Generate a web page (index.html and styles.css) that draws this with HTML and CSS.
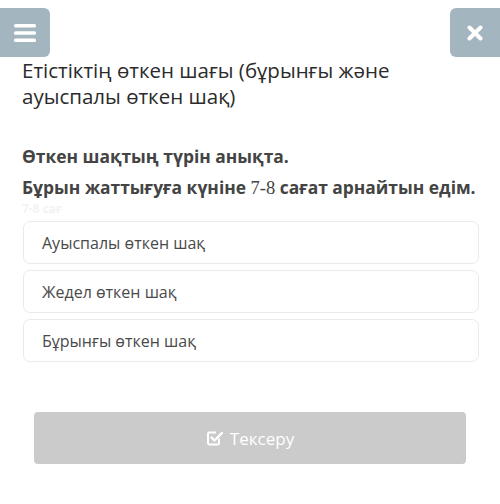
FILE: index.html
```html
<!DOCTYPE html>
<html>
<head>
<meta charset="utf-8">
<link rel="stylesheet" href="styles.css">
</head>
<body>
<div class="page">
  <div class="topbar">
    <div class="btn-menu">
      <svg width="22" height="18" viewBox="0 0 22 18"><rect x="0" y="0" width="22" height="3.4" rx="1.5" fill="#fff"/><rect x="0" y="7.3" width="22" height="3.4" rx="1.5" fill="#fff"/><rect x="0" y="14.6" width="22" height="3.4" rx="1.5" fill="#fff"/></svg>
    </div>
    <div class="btn-close">
      <svg width="16" height="16" viewBox="0 0 16 16"><path d="M2.5 2.5 L13.5 13.5 M13.5 2.5 L2.5 13.5" stroke="#fff" stroke-width="4" stroke-linecap="round"/></svg>
    </div>
  </div>
  <h1 class="title">Етістіктің өткен шағы (бұрынғы және ауыспалы өткен шақ)</h1>
  <div class="question">
    <p class="q-task">Өткен шақтың түрін анықта.</p>
    <p class="q-text">Бұрын жаттығуға күніне <span class="num">7-8</span> сағат арнайтын едім.</p>
    <p class="q-faint">7-8 сағ</p>
  </div>
  <div class="options">
    <div class="option">Ауыспалы өткен шақ</div>
    <div class="option">Жедел өткен шақ</div>
    <div class="option">Бұрынғы өткен шақ</div>
  </div>
  <div class="actions">
    <div class="check-btn">
      <svg width="18" height="18" viewBox="0 0 18 18"><path d="M13 9.5 V14 a1.5 1.5 0 0 1 -1.5 1.5 H3.5 A1.5 1.5 0 0 1 2 14 V5 a1.5 1.5 0 0 1 1.5 -1.5 H10" fill="none" stroke="#fff" stroke-width="2"/><path d="M5.5 8.5 L8.5 11.5 L16 4" fill="none" stroke="#fff" stroke-width="2.4" stroke-linecap="round" stroke-linejoin="round"/></svg>
      <span>Тексеру</span>
    </div>
  </div>
</div>
</body>
</html>
```
FILE: styles.css
```css
html, body {
  margin: 0;
  padding: 0;
  background: #fff;
}
.page {
  width: 500px;
  height: 504px;
  overflow: hidden;
  font-family: "Open Sans", "Noto Sans", sans-serif;
  color: #333;
}
.topbar {
  display: flex;
  justify-content: space-between;
  padding-top: 8px;
  height: 49px;
}
.btn-menu, .btn-close {
  width: 50px;
  height: 49px;
  background: #a3b5bf;
  display: flex;
  align-items: center;
  justify-content: center;
}
.btn-menu {
  border-radius: 0 6px 6px 0;
}
.btn-close {
  border-radius: 6px 0 0 6px;
}
.title {
  margin: 0;
  padding: 0 40px 0 22px;
  font-size: 20.5px;
  font-weight: 400;
  line-height: 26px;
  color: #2b2b2b;
}
.question {
  padding: 0 20px 0 22px;
  margin-top: 35px;
}
.question p {
  margin: 0;
}
.q-task, .q-text {
  font-size: 17.4px;
  font-weight: 700;
  color: #444;
  line-height: 24px;
  white-space: nowrap;
}
.q-text {
  margin-top: 7px !important;
}
.num {
  font-family: "Liberation Serif", "DejaVu Serif", serif;
  font-weight: 400;
  font-size: 18.5px;
}
.q-faint {
  font-size: 12px;
  line-height: 14px;
  margin-top: 2px !important;
  color: #f3f3f3;
  font-weight: 700;
}
.options {
  display: flex;
  flex-direction: column;
  gap: 6px;
  margin: 5px 21px 0 23px;
}
.option {
  height: 41px;
  border: 1px solid #e9ebeb;
  border-radius: 7px;
  display: flex;
  align-items: center;
  padding-left: 18px;
  font-size: 16px;
  color: #4a4a4a;
}
.actions {
  padding: 0 34px;
  margin-top: 50px;
}
.check-btn {
  height: 52px;
  background: #cbcbcb;
  border-radius: 4px;
  display: flex;
  align-items: center;
  justify-content: center;
  gap: 6px;
  color: #fff;
  font-size: 17px;
}
```
